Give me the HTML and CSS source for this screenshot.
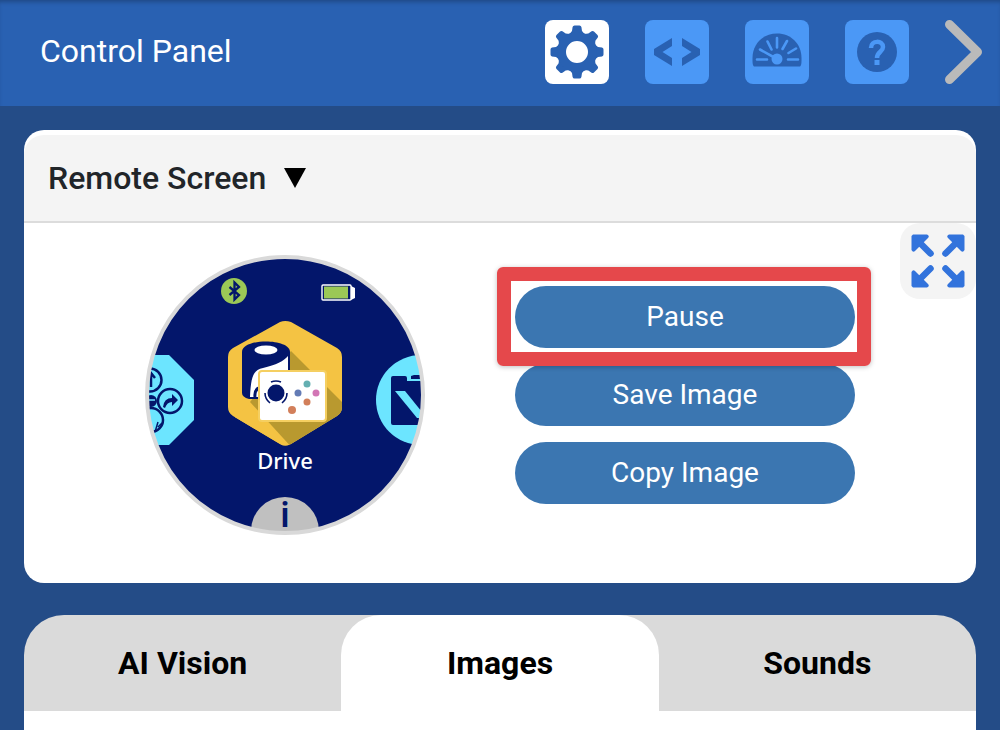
FILE: index.html
```
<!DOCTYPE html>
<html lang="en">
<head>
  <meta charset="UTF-8" />
  <meta name="viewport" content="width=device-width, initial-scale=1.0" />
  <title>Control Panel</title>
  <link rel="stylesheet" href="styles.css">
</head>
<body>

  <header class="topbar">
    <h1>Control Panel</h1>
    <nav class="tools">
      <button type="button" class="tool active" aria-label="Settings">
        <svg viewBox="0 0 64 64">
          <defs>
            <path id="tooth" d="M24.500 14 L27 11 L27.600 7 Q28 5.500 29.500 5.500 H34.500 Q36 5.500 36.400 7 L37 11 L39.500 14 Z" />
          </defs>
          <g fill="#2961b2">
            <use href="#tooth" />
            <use href="#tooth" transform="rotate(45 32 32)" />
            <use href="#tooth" transform="rotate(90 32 32)" />
            <use href="#tooth" transform="rotate(135 32 32)" />
            <use href="#tooth" transform="rotate(180 32 32)" />
            <use href="#tooth" transform="rotate(225 32 32)" />
            <use href="#tooth" transform="rotate(270 32 32)" />
            <use href="#tooth" transform="rotate(315 32 32)" />
          </g>
          <circle cx="32" cy="32" r="15.500" fill="none" stroke="#2961b2" stroke-width="9" />
        </svg>
      </button>
      <button type="button" class="tool" aria-label="Code">
        <svg viewBox="0 0 64 64" fill="#2961b2">
          <path d="M27 18 V26 L17.500 32 L27 38 V46 L9 35 V29 Z" />
          <path d="M37 18 V26 L46.500 32 L37 38 V46 L55 35 V29 Z" />
        </svg>
      </button>
      <button type="button" class="tool" aria-label="Dashboard">
        <svg viewBox="0 0 64 64">
          <path d="M9 46.500 C7.500 45 7.500 43 7.500 38 C7.500 24 18 13.500 32 13.500 S56.500 24 56.500 38 C56.500 43 56.500 45 55 46.500 Z" fill="#2961b2" />
          <g stroke="#4b98f6" stroke-width="2.600" stroke-linecap="round">
            <path d="M12 39.500 H22 M43 39.500 H53 M15 29.500 L32 39 M22.500 21.500 L26.500 29.500 M32 18 V27.500 M42 21 L37.500 29 M51 28.500 L43.500 33" />
          </g>
          <circle cx="32" cy="39" r="5.500" fill="#4b98f6" />
        </svg>
      </button>
      <button type="button" class="tool" aria-label="Help">
        <svg viewBox="0 0 64 64">
          <circle cx="32" cy="32" r="20" fill="#2961b2" />
          <path d="M26 28 C26 20 38 20 38 27 C38 32 32 31.500 32 38" fill="none" stroke="#4b98f6" stroke-width="4.500" />
          <rect x="29.500" y="40" width="5" height="5" fill="#4b98f6" />
        </svg>
      </button>
      <button type="button" class="next" aria-label="Next">
        <svg viewBox="0 0 38 64">
          <path d="M4.500 4.500 L32.500 32 L4.500 59.500" fill="none" stroke="#bababa" stroke-width="9" stroke-linecap="round" stroke-linejoin="round" />
        </svg>
      </button>
    </nav>
  </header>

  <main>
    <section class="card">
      <h2 class="card-title">
        <button type="button">Remote Screen
          <svg class="caret" viewBox="0 0 22 20"><path d="M0 0 H22 L11 20 Z" /></svg>
        </button>
      </h2>
      <div class="card-body">
        <svg class="screen" viewBox="0 0 280 280" role="img" aria-label="Robot screen">
          <defs>
            <clipPath id="round"><circle cx="139" cy="140" r="138" /></clipPath>
            <clipPath id="hex"><path d="M134 67 Q139 65 145 67 L191 93 Q196 96 196 102 V152 Q196 158 191 161 L145 189 Q139 192 134 189 L87 161 Q82 158 82 152 V102 Q82 96 87 93 Z" /></clipPath>
          </defs>
          <circle cx="140" cy="140" r="138" fill="#03166b" />
          <g clip-path="url(#round)" transform="translate(1 0)">
            <!-- left neighbour: drive keys -->
            <path d="M0 100 H23 L48 125 V165 L23 190 H0 Z" fill="#6ce5ff" />
            <g fill="none" stroke="#03166b" stroke-width="2.500">
              <circle cx="4" cy="125" r="11.500" />
              <circle cx="24" cy="146" r="12" />
              <circle cx="5" cy="165" r="12" />
              <path d="M5 132 V119 M1 123 L5 118 L9 123" />
              <path d="M9 177 L12 167 M12 172 L16 168" stroke-width="1.500" />
            </g>
            <circle cx="5" cy="146" r="6" fill="#03166b" />
            <path d="M1 145 H9" stroke="#6ce5ff" stroke-width="1.500" />
            <path d="M17 152 Q18 143 26 143 V139 L32 145 L26 151 V147 Q21 147 19 153 Z" fill="#03166b" />

            <!-- right neighbour: clipboard -->
            <circle cx="275" cy="145" r="45" fill="#6ce5ff" />
            <path d="M245 123 Q245 121 247 121 H259 Q261 121 261 123 V126 H280 V170 H247 Q245 170 245 168 Z M265 124 V121 L268 120 H280 V124 Z" fill="#03166b" />
            <path d="M249 136 H259 L276 157 L275 163 H271 Z" fill="#6ce5ff" />

            <!-- drive -->
            <g clip-path="url(#hex)">
              <rect x="80" y="60" width="120" height="135" fill="#f4c343" />
              <path d="M145 96 L200 151 V195 H148 L104 147 Z" fill="#b9992f" />
              <path d="M103 150 L146 195 H130 L85 165 Z" fill="#f4c343" />
            </g>
            <path d="M96 97 C96 83 144 83 144 97 V144 H103 Q96 142 96 138 Z" fill="#03166b" />
            <ellipse cx="120" cy="95" rx="11.500" ry="4.500" fill="#fff" />
            <path d="M104 142 C105 122 107 115 117 113 C130 110 138 106 142 101 V142 Z" fill="#fff" />
            <path d="M109 142 Q108 134 115 132" fill="none" stroke="#03166b" stroke-width="3" />
            <rect x="113" y="116" width="67" height="50" rx="3" fill="#fff" stroke="#f5cf61" stroke-width="2" />
            <circle cx="130" cy="138" r="8.500" fill="#03166b" />
            <path d="M125 127 Q130 125 135 127 M119 138 Q119 144 124 148 M141 138 Q141 144 136 148" fill="none" stroke="#03166b" stroke-width="1.600" />
            <circle cx="161" cy="129" r="3.500" fill="#64afb1" />
            <circle cx="152" cy="138" r="3.500" fill="#637bb5" />
            <circle cx="170" cy="138" r="3.500" fill="#d276b5" />
            <circle cx="161" cy="147" r="3.500" fill="#d27f5a" />
            <circle cx="146" cy="155" r="4" fill="#d27f5a" />

            <!-- status icons -->
            <circle cx="88" cy="36" r="13" fill="#9bc856" />
            <path d="M83.500 32 L93 40 L88.500 44.500 V27.500 L93 32 L83.500 40" fill="none" stroke="#03166b" stroke-width="2.300" />
            <rect x="176" y="30" width="29" height="15" rx="1" fill="#03166b" stroke="#fff" stroke-width="1.400" />
            <rect x="178" y="31.500" width="24" height="12" fill="#9bc856" />
            <path d="M205 31 L209 33 V43 L205 45 Z" fill="#fff" />

            <!-- info -->
            <circle cx="139" cy="276" r="34" fill="#c0c0c0" />
          </g>
          <circle cx="140" cy="140" r="138" fill="none" stroke="#d9d9d9" stroke-width="4" />
          <text class="app-name" x="140" y="214">Drive</text>
          <text class="info" x="140" y="272">i</text>
        </svg>

        <div class="actions">
          <div class="highlight"><button type="button" class="btn">Pause</button></div>
          <button type="button" class="btn">Save Image</button>
          <button type="button" class="btn">Copy Image</button>
        </div>

        <button type="button" class="expand" aria-label="Full screen">
          <svg viewBox="0 0 54 54">
            <defs>
              <g id="arrow">
                <path d="M2 0.500 H16 Q19 2 17 4 L4 17 Q2 19 0.500 16 V2 Z" />
                <path d="M8 8 L19.500 19.500" stroke="#3273dc" stroke-width="6.500" stroke-linecap="round" />
              </g>
            </defs>
            <g fill="#3273dc">
              <use href="#arrow" />
              <use href="#arrow" transform="rotate(90 27 27)" />
              <use href="#arrow" transform="rotate(180 27 27)" />
              <use href="#arrow" transform="rotate(270 27 27)" />
            </g>
          </svg>
        </button>
      </div>
    </section>

    <section class="media">
      <div class="tabs" role="tablist">
        <button type="button" class="tab" role="tab">AI Vision</button>
        <button type="button" class="tab active" role="tab" aria-selected="true">Images</button>
        <button type="button" class="tab" role="tab">Sounds</button>
      </div>
      <div class="tab-panel" role="tabpanel"></div>
    </section>
  </main>

</body>
</html>
```
FILE: styles.css
```
* {
  margin: 0;
  padding: 0;
  box-sizing: border-box;
  font-family: Roboto, sans-serif;
}

body {
  background: #244c87;
  color: #212529;
  min-height: 100vh;
  display: flex;
  flex-direction: column;
}

button {
  border: none;
  background: none;
  color: inherit;
  font-size: inherit;
  font-weight: inherit;
  cursor: pointer;
}

svg {
  display: block;
}

.topbar {
  display: flex;
  justify-content: space-between;
  align-items: center;
  padding: 20px 17px 22px 40px;
  background: #2961b2;
  box-shadow: inset 0 4px 4px -2px rgba(0, 0, 0, 0.25);
}

.topbar h1 {
  color: #fff;
  font-size: 32px;
  font-weight: 400;
  padding-bottom: 2px;
}

.tools {
  display: flex;
  gap: 36px;
}

.tool {
  width: 64px;
  height: 64px;
  border-radius: 8px;
  background: #4b98f6;
}

.tool.active {
  background: #fff;
}

.next {
  width: 38px;
  height: 64px;
}

main {
  flex: 1;
  display: flex;
  flex-direction: column;
  gap: 32px;
  padding: 24px 24px 0;
}

.card {
  background: #fff;
  border-radius: 20px;
  padding-top: 5px;
}

.card-title {
  background: #f4f4f4;
  border-bottom: 2px solid #dcdcdc;
  border-radius: 20px 20px 0 0;
  padding: 23px 24px;
  font-size: 32px;
  line-height: 40px;
  font-weight: 500;
}

.card-title button {
  display: flex;
  align-items: center;
  gap: 18px;
  line-height: 40px;
}

.caret {
  width: 22px;
  height: 20px;
}

.card-body {
  position: relative;
  display: flex;
  justify-content: center;
  gap: 90px;
  padding: 32px 0 48px;
}

.screen {
  width: 280px;
  height: 280px;
}

.screen text {
  font-family: "Noto Sans", sans-serif;
  text-anchor: middle;
}

.app-name {
  font-size: 22px;
  font-weight: 500;
  fill: #fff;
}

.info {
  font-size: 35px;
  font-weight: 600;
  fill: #03166b;
}

.actions {
  width: 340px;
  display: flex;
  flex-direction: column;
  gap: 16px;
  padding-top: 31px;
}

.btn {
  width: 100%;
  height: 62px;
  padding-bottom: 2px;
  border-radius: 31px;
  background: #3b76b1;
  color: #fff;
  font-size: 28px;
}

.highlight {
  position: relative;
  height: 62px;
}

.highlight::after {
  content: "";
  position: absolute;
  inset: -19px -16px -18px -18px;
  border: 14px solid #e5484b;
  border-radius: 6px;
  box-shadow: 0 1px 5px rgba(0, 0, 0, 0.25);
  pointer-events: none;
}

.expand {
  position: absolute;
  top: 0;
  right: 0;
  padding: 11px;
  border-radius: 20px;
  background: #f4f4f4;
}

.expand svg {
  width: 54px;
  height: 54px;
}

.media {
  flex: 1;
  display: flex;
  flex-direction: column;
}

.tabs {
  display: grid;
  grid-template-columns: repeat(3, 1fr);
  background: #dadada;
  border-radius: 40px 40px 0 0;
}

.tab {
  height: 96px;
  color: #000;
  font-size: 32px;
  font-weight: 700;
}

.tab.active {
  background: #fff;
  border-radius: 40px 40px 0 0;
}

.tab-panel {
  flex: 1;
  background: #fff;
}
```
